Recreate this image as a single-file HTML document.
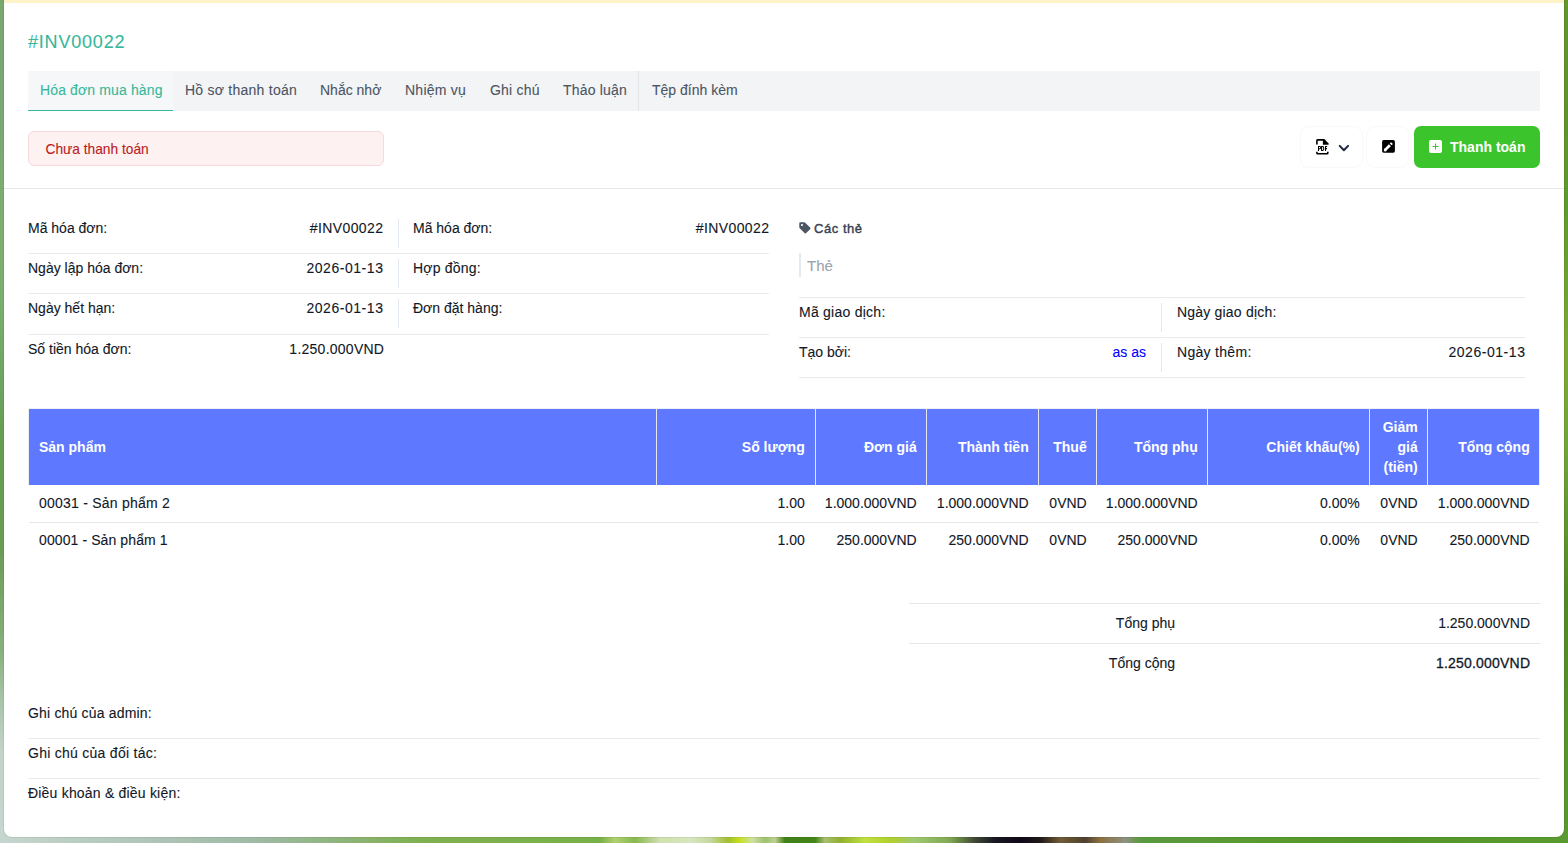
<!DOCTYPE html>
<html><head><meta charset="utf-8">
<style>
*{margin:0;padding:0;box-sizing:border-box}
html,body{width:1568px;height:843px;overflow:hidden}
body{font-family:"Liberation Sans",sans-serif;font-size:14px;color:#111827;position:relative;
background:linear-gradient(180deg,#78a86e 0px,#78a874 100px,#7cae70 220px,#7aae6e 300px,#649c52 450px,#6a9c56 550px,#88b07c 650px,#a8c4a8 700px,#c2d4c8 750px,#c5d7cf 843px)}
.bgr{position:absolute;right:0;top:0;width:8px;height:843px;background:linear-gradient(180deg,#64962c 0px,#62922a 100px,#5c9a2c 200px,#7ea834 350px,#72a438 450px,#508826 600px,#58942c 750px,#5a9830 843px)}
.bgb{position:absolute;left:0;bottom:0;width:1568px;height:10px;
background:linear-gradient(90deg,#c5d6ce 0px,#b0c4b8 150px,#9ebaa4 260px,#8eb47c 340px,#80b050 420px,#78b048 600px,#b0d070 615px,#88b850 635px,#d0e0b0 660px,#d8e6c0 690px,#c8d8a0 710px,#a0c030 728px,#c8e020 740px,#d0e0a0 752px,#a0c070 765px,#c0d090 775px,#408018 785px,#448418 815px,#a8c070 825px,#90b030 840px,#c0e040 865px,#b0d030 890px,#a0c870 915px,#80a850 950px,#404838 975px,#181820 995px,#100818 1020px,#201818 1040px,#705a38 1060px,#504030 1085px,#8a7040 1100px,#909080 1125px,#5a9a40 1140px,#5a9a30 1250px,#55962a 1400px,#5a9a30 1568px)}
.card{position:absolute;left:4px;top:-10px;width:1560px;height:847px;background:#fff;border-radius:8px;box-shadow:0 0 0 1px rgba(0,30,0,.07)}
.ystrip{position:absolute;left:4px;top:0;width:1560px;height:3px;background:#fef3c8}
.t{position:absolute;white-space:nowrap;line-height:20px;height:20px;-webkit-text-stroke:.1px currentColor}
.tab{-webkit-text-stroke:.1px currentColor}
.r{text-align:right}
.hl{position:absolute;height:1px;background:#e5e7eb}
.vl{position:absolute;width:1px;background:#e2e8f0}
.tabs{position:absolute;left:28px;top:71px;width:1512px;height:40px;background:#f3f4f6}
.tab{position:absolute;top:9px;color:#4b5563;line-height:20px;white-space:nowrap}
.th{position:absolute;top:409px;height:76px;background:#5e78ff}
.thb{position:absolute;top:409px;width:1px;height:77px;background:#e5e7eb}
.n{letter-spacing:0.5px;margin-right:-0.5px}
.hd{color:#fff;font-weight:bold;-webkit-text-stroke:0}
</style></head><body>
<div class="bgr"></div>
<div class="bgb"></div>
<div class="card"></div>
<div class="ystrip"></div>

<!-- title -->
<div class="t" style="left:28px;top:32px;font-size:18px;letter-spacing:0.8px;color:#36b79a">#INV00022</div>

<!-- tabs -->
<div class="tabs">
  <div style="position:absolute;left:0;top:0;width:145px;height:40px;background:#f6f7f9;border-bottom:1px solid #34b79b"></div>
  <div class="tab" style="left:12px;color:#36b79a;letter-spacing:.13px">Hóa đơn mua hàng</div>
  <div class="tab" style="left:157px;letter-spacing:.25px">Hồ sơ thanh toán</div>
  <div class="tab" style="left:292px">Nhắc nhở</div>
  <div class="tab" style="left:377px;letter-spacing:.25px">Nhiệm vụ</div>
  <div class="tab" style="left:462px;letter-spacing:.2px">Ghi chú</div>
  <div class="tab" style="left:535px;letter-spacing:.2px">Thảo luận</div>
  <div style="position:absolute;left:610px;top:0;width:1px;height:40px;background:#e2e4e8"></div>
  <div class="tab" style="left:624px">Tệp đính kèm</div>
</div>

<!-- status -->
<div style="position:absolute;left:28px;top:131px;width:356px;height:35px;background:#fef1f2;border:1px solid #f9d8db;border-radius:6px"></div>
<div class="t" style="left:45.5px;top:140.2px;font-size:13.75px;color:#b91c1c">Chưa thanh toán</div>

<!-- buttons -->
<div style="position:absolute;left:1300px;top:126px;width:63px;height:42px;border-radius:9px;border:1px solid #f9f9f9"></div>
<div style="position:absolute;left:1366px;top:126px;width:43px;height:42px;border-radius:9px;border:1px solid #f9f9f9"></div>
<svg style="position:absolute;left:1312px;top:135px" width="40" height="23" viewBox="1312 135 40 23">
  <path d="M1316.9 144.6 V140.6 Q1316.9 139.9 1317.6 139.9 H1323.6" fill="none" stroke="#000" stroke-width="1.6"/>
  <path d="M1322.9 139.1 H1324.4 L1328.6 143.4 V144.7 H1322.9 Z" fill="#000"/>
  <path d="M1316.9 151.8 V153.1 Q1316.9 153.8 1317.6 153.8 H1327.1 Q1327.8 153.8 1327.8 153.1 V151.8" fill="none" stroke="#000" stroke-width="1.6"/>
  <path d="M1318.5 150.9 V146.5 H1319.8 Q1320.7 146.5 1320.7 147.6 Q1320.7 148.7 1319.8 148.7 H1318.5 M1321.6 146.5 V150.4 H1322.6 Q1323.8 150.4 1323.8 148.45 Q1323.8 146.5 1322.6 146.5 Z M1325.5 150.9 V146.5 H1327.2 M1325.5 148.6 H1327" fill="none" stroke="#000" stroke-width="1.05"/>
  <path d="M1339.7 145.9 L1343.9 150.3 L1348.1 145.9" fill="none" stroke="#1e293b" stroke-width="2" stroke-linecap="round" stroke-linejoin="round"/>
</svg>
<svg style="position:absolute;left:1378px;top:136px" width="22" height="21" viewBox="1378 136 22 21">
  <rect x="1382.1" y="140.1" width="12.8" height="12.6" rx="1.6" fill="#000"/>
  <path d="M1385.2 149.9 L1389.9 145.2" stroke="#fff" stroke-width="2.7" stroke-linecap="butt"/>
  <path d="M1385.2 149.9 L1385.2 150.2" stroke="#fff" stroke-width="2.7" stroke-linecap="round"/>
  <path d="M1390.7 144.4 L1392 143.1" stroke="#fff" stroke-width="2.7" stroke-linecap="butt"/>
</svg>
<div style="position:absolute;left:1414px;top:126px;width:126px;height:42px;background:#3cc42c;border-radius:7px"></div>
<svg style="position:absolute;left:1429px;top:140px" width="13" height="13" viewBox="0 0 13 13">
  <rect x="0" y="0" width="13" height="13" rx="2" fill="#fff"/>
  <path d="M6.5 3.5 V9.5 M3.5 6.5 H9.5" stroke="#3cc42c" stroke-width="1"/>
</svg>
<div class="t" style="left:1450px;top:137px;color:#fff;font-weight:bold;-webkit-text-stroke:0">Thanh toán</div>

<!-- divider -->
<div class="hl" style="left:4px;top:188px;width:1560px"></div>

<!-- info left -->
<div class="t" style="left:28px;top:218px">Mã hóa đơn:</div>
<div class="t r" style="right:1184.6px;top:218px;letter-spacing:.4px">#INV00022</div>
<div class="t" style="left:28px;top:258px">Ngày lập hóa đơn:</div>
<div class="t r" style="right:1184.5px;top:258px;letter-spacing:.55px">2026-01-13</div>
<div class="t" style="left:28px;top:298px">Ngày hết hạn:</div>
<div class="t r" style="right:1184.5px;top:298px;letter-spacing:.55px">2026-01-13</div>
<div class="t" style="left:28px;top:339px">Số tiền hóa đơn:</div>
<div class="t r" style="right:1183.8px;top:339px;letter-spacing:.25px">1.250.000VND</div>
<div class="hl" style="left:28px;top:253px;width:741px;background:#ebebeb"></div>
<div class="hl" style="left:28px;top:293px;width:741px;background:#ebebeb"></div>
<div class="hl" style="left:28px;top:334px;width:741px;background:#ebebeb"></div>

<!-- info mid -->
<div class="vl" style="left:398px;top:219px;height:29px"></div>
<div class="vl" style="left:398px;top:259px;height:29px"></div>
<div class="vl" style="left:398px;top:299px;height:29px"></div>
<div class="t" style="left:413px;top:218px">Mã hóa đơn:</div>
<div class="t r" style="right:798.6px;top:218px;letter-spacing:.4px">#INV00022</div>
<div class="t" style="left:413px;top:258px;letter-spacing:.2px">Hợp đồng:</div>
<div class="t" style="left:413px;top:298px">Đơn đặt hàng:</div>

<!-- right -->
<svg style="position:absolute;left:799px;top:222px" width="12" height="12" viewBox="0 0 12 12">
  <path d="M0.3 1.3 Q0.3 0.3 1.3 0.3 H5.2 Q5.8 0.3 6.2 0.7 L11.3 5.8 Q11.8 6.3 11.3 6.9 L6.9 11.3 Q6.3 11.8 5.8 11.3 L0.7 6.2 Q0.3 5.8 0.3 5.2 Z" fill="#4b5563"/>
  <circle cx="3" cy="3" r="1.1" fill="#fff"/>
</svg>
<div class="t" style="left:814px;top:219px;font-size:13px;letter-spacing:.55px;-webkit-text-stroke:0.4px #374151;color:#374151">Các thẻ</div>
<div style="position:absolute;left:799px;top:253px;width:2px;height:24px;background:#e5e9f0"></div>
<div class="t" style="left:807px;top:255.6px;font-size:15px;color:#9ca3af">Thẻ</div>
<div class="hl" style="left:799px;top:297px;width:726px;background:#ebebeb"></div>
<div class="hl" style="left:799px;top:337px;width:726px;background:#ebebeb"></div>
<div class="hl" style="left:799px;top:377px;width:726px;background:#ebebeb"></div>
<div class="vl" style="left:1161px;top:303px;height:29px"></div>
<div class="vl" style="left:1161px;top:343px;height:29px"></div>
<div class="t" style="left:799px;top:302px;letter-spacing:.25px">Mã giao dịch:</div>
<div class="t" style="left:1177px;top:302px;letter-spacing:.2px">Ngày giao dịch:</div>
<div class="t" style="left:799px;top:342px">Tạo bởi:</div>
<div class="t r" style="right:422px;top:342px;color:#0000ff">as as</div>
<div class="t" style="left:1177px;top:342px;letter-spacing:.3px">Ngày thêm:</div>
<div class="t r" style="right:42.5px;top:342px;letter-spacing:.55px">2026-01-13</div>

<!-- table header -->
<div style="position:absolute;left:28px;top:408px;width:1512px;height:77px;border:1px solid #eef0f3;border-bottom:0"></div>
<div class="th" style="left:29px;width:1510px"></div>
<div class="thb" style="left:656px"></div>
<div class="thb" style="left:815px"></div>
<div class="thb" style="left:926px"></div>
<div class="thb" style="left:1038px"></div>
<div class="thb" style="left:1096px"></div>
<div class="thb" style="left:1207px"></div>
<div class="thb" style="left:1369px"></div>
<div class="thb" style="left:1427px"></div>
<div class="t hd" style="left:39px;top:437px">Sản phẩm</div>
<div class="t hd r" style="right:763.3px;top:437px">Số lượng</div>
<div class="t hd r" style="right:651.3px;top:437px">Đơn giá</div>
<div class="t hd r" style="right:539.3px;top:437px">Thành tiền</div>
<div class="t hd r" style="right:481.3px;top:437px">Thuế</div>
<div class="t hd r" style="right:370.3px;top:437px">Tổng phụ</div>
<div class="t hd r" style="right:208.3px;top:437px">Chiết khấu(%)</div>
<div class="t hd r" style="right:150.3px;top:417px">Giảm</div>
<div class="t hd r" style="right:150.3px;top:437px">giá</div>
<div class="t hd r" style="right:150.3px;top:457px">(tiền)</div>
<div class="t hd r" style="right:38.3px;top:437px">Tổng cộng</div>

<!-- rows -->
<div class="t" style="left:39px;top:493px;letter-spacing:.23px">00031 - Sản phẩm 2</div>
<div class="t r" style="right:763.3px;top:493px">1.00</div>
<div class="t r" style="right:651.3px;top:493px">1.000.000VND</div>
<div class="t r" style="right:539.3px;top:493px">1.000.000VND</div>
<div class="t r" style="right:481.3px;top:493px">0VND</div>
<div class="t r" style="right:370.3px;top:493px">1.000.000VND</div>
<div class="t r" style="right:208.3px;top:493px">0.00%</div>
<div class="t r" style="right:150.3px;top:493px">0VND</div>
<div class="t r" style="right:38.3px;top:493px">1.000.000VND</div>
<div class="hl" style="left:29px;top:522px;width:1510px"></div>
<div class="t" style="left:39px;top:530px;letter-spacing:.1px">00001 - Sản phẩm 1</div>
<div class="t r" style="right:763.3px;top:530px">1.00</div>
<div class="t r" style="right:651.3px;top:530px">250.000VND</div>
<div class="t r" style="right:539.3px;top:530px">250.000VND</div>
<div class="t r" style="right:481.3px;top:530px">0VND</div>
<div class="t r" style="right:370.3px;top:530px">250.000VND</div>
<div class="t r" style="right:208.3px;top:530px">0.00%</div>
<div class="t r" style="right:150.3px;top:530px">0VND</div>
<div class="t r" style="right:38.3px;top:530px">250.000VND</div>

<!-- totals -->
<div class="hl" style="left:909px;top:603px;width:631px"></div>
<div class="hl" style="left:909px;top:643px;width:631px"></div>
<div class="t r" style="right:393px;top:613px">Tổng phụ</div>
<div class="t r" style="right:38px;top:613px">1.250.000VND</div>
<div class="t r" style="right:393px;top:653px">Tổng cộng</div>
<div class="t r" style="right:37.8px;top:653px;letter-spacing:.2px;-webkit-text-stroke:.3px #111827">1.250.000VND</div>

<!-- notes -->
<div class="t" style="left:28px;top:703px;letter-spacing:.18px">Ghi chú của admin:</div>
<div class="hl" style="left:28px;top:738px;width:1512px;background:#ebebeb"></div>
<div class="t" style="left:28px;top:743px;letter-spacing:.27px">Ghi chú của đối tác:</div>
<div class="hl" style="left:28px;top:778px;width:1512px;background:#ebebeb"></div>
<div class="t" style="left:28px;top:783px;letter-spacing:.2px">Điều khoản &amp; điều kiện:</div>
</body></html>
